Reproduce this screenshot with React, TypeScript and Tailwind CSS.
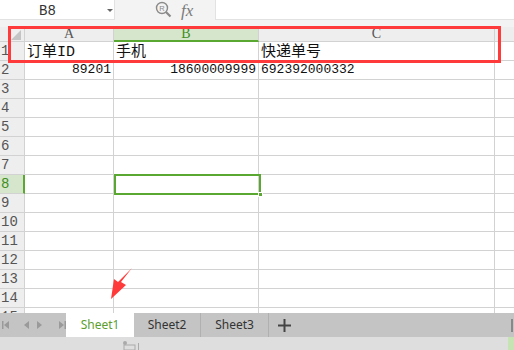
import React from "react";

const mono = { fontFamily: '"Liberation Mono", "Noto Sans CJK SC", monospace' };

const rows = Array.from({ length: 15 }, (_, i) => i + 1);

function Cell({ w, children, align = "left" }: { w: string; children?: React.ReactNode; align?: string }) {
  return (
    <div
      className={`${w} h-[19px] shrink-0 border-r border-b border-[#d2d2d2] flex items-center overflow-hidden whitespace-nowrap text-[13px] text-[#111] ${align === "right" ? "justify-end pr-[2px]" : "pl-[2px]"}`}
      style={mono}
    >
      {children}
    </div>
  );
}

function Zh({ children }: { children: React.ReactNode }) {
  return (
    <span className="text-[15px] leading-none pt-[2px]" style={mono}>
      {children}
    </span>
  );
}

export default function App() {
  return (
    <div className="relative w-[514px] h-[350px] overflow-hidden bg-white" style={mono}>
      {/* toolbar */}
      <div className="h-[27px] bg-[#f3f3f3] flex items-start">
        <div className="w-[115px] h-[20px] bg-white border-b border-r border-[#e2e2e2] flex items-center relative">
          <span className="absolute left-[39px] top-[1px] text-[14px] text-[#333]">B8</span>
          <svg className="absolute left-[107px] top-[9px]" width="6" height="3" viewBox="0 0 6 3"><path d="M0 0h6L3 3z" fill="#666" /></svg>
        </div>
        <div className="w-[100px] h-[20px] flex items-center relative">
          <svg className="absolute left-[40px] top-[1px]" width="17" height="17" viewBox="0 0 17 17">
            <circle cx="7" cy="7" r="5.5" fill="none" stroke="#8a8a8a" strokeWidth="1.4" />
            <path d="M11 11L15.5 15.5" stroke="#8a8a8a" strokeWidth="2.2" />
            <text x="7" y="9.6" textAnchor="middle" fontSize="7.5" fill="#8a8a8a" fontFamily="Liberation Sans">R</text>
          </svg>
          <span className="absolute left-[66px] top-[-2px] text-[17px] italic text-[#7a7a7a]" style={{ fontFamily: '"Liberation Serif", serif' }}>fx</span>
        </div>
        <div className="flex-1 h-[20px] bg-white border-b border-l border-[#e2e2e2]" />
      </div>

      {/* column header */}
      <div className="flex h-[15px] bg-[#eeeeee]">
        <div className="w-[25px] h-[15px] shrink-0 border-r border-b border-[#d2d2d2] relative">
          <svg className="absolute left-[11px] top-[3px]" width="10" height="10" viewBox="0 0 10 10"><path d="M10 0V10H0z" fill="#c4c4c4" /></svg>
        </div>
        <div className="w-[89px] shrink-0 border-r border-b border-[#d2d2d2] flex items-center justify-center text-[14px] text-[#555] leading-none" style={{ fontFamily: '"Liberation Serif", serif' }}>A</div>
        <div className="w-[145px] shrink-0 bg-[#d6e6cd] border-r border-[#d2d2d2] border-b-2 border-b-[#5aa832] flex items-center justify-center text-[14px] text-[#3f8f1f] leading-none" style={{ fontFamily: '"Liberation Serif", serif' }}>B</div>
        <div className="w-[236px] shrink-0 border-r border-b border-[#d2d2d2] flex items-center justify-center text-[14px] text-[#555] leading-none" style={{ fontFamily: '"Liberation Serif", serif' }}>C</div>
        <div className="flex-1 border-b border-[#d2d2d2]" />
      </div>

      {/* rows */}
      {rows.map((r) => (
        <div key={r} className="flex h-[19px]">
          <div
            className={`w-[25px] h-[19px] shrink-0 border-b border-[#d2d2d2] flex items-center pl-[1px] pt-[1px] text-[14px] ${r === 8 ? "bg-[#d6e6cd] text-[#3f8f1f] border-r-2 border-r-[#5aa832]" : "bg-[#eeeeee] text-[#555] border-r border-r-[#d2d2d2]"}`}
            style={mono}
          >
            {r}
          </div>
          <Cell w="w-[89px]" align={r === 2 ? "right" : "left"}>
            {r === 1 ? <Zh>订单ID</Zh> : r === 2 ? "89201" : null}
          </Cell>
          <Cell w="w-[145px]" align={r === 2 ? "right" : "left"}>
            {r === 1 ? <Zh>手机</Zh> : r === 2 ? "18600009999" : null}
          </Cell>
          <Cell w="w-[236px]">{r === 1 ? <Zh>快递单号</Zh> : r === 2 ? "692392000332" : null}</Cell>
          <div className="flex-1 h-[19px] border-b border-[#d2d2d2]" />
        </div>
      ))}

      {/* selected cell */}
      <div className="absolute left-[114px] top-[174px] w-[147px] h-[21px] border-2 border-[#5aa832]" />
      <div className="absolute left-[258px] top-[192px] w-[5px] h-[5px] bg-[#5aa832] border border-white" />
      {/* small green mark */}
      <div className="absolute left-[259px] top-[60px] w-[4px] h-[2px] bg-[#5aa832]" />

      {/* red annotation box */}
      <div className="absolute left-[8px] top-[26px] w-[493px] h-[37px] border-[3px] border-[#ff3a3a]" />

      {/* red arrow */}
      <svg className="absolute left-[106px] top-[266px]" width="30" height="36" viewBox="0 0 30 36">
        <path d="M26 2 L15 16 L20 19 L5 33 L8 13 L12 16 Z" fill="#ff3a3a" />
      </svg>

      {/* tab bar */}
      <div className="absolute left-0 top-[313px] w-[514px] h-[24px] bg-[#c4c4c4] flex items-stretch" style={{ fontFamily: '"Noto Sans", "Liberation Sans", sans-serif' }}>
        <div className="w-[66px] flex items-center gap-[6px] pl-[2px]">
          <svg width="8" height="10" viewBox="0 0 8 10"><rect x="0" y="1" width="1.5" height="8" fill="#9a9a9a" /><path d="M7 1V9L2 5z" fill="#9a9a9a" /></svg>
          <svg width="8" height="10" viewBox="0 0 8 10" className="ml-[6px]"><path d="M7 1V9L2 5z" fill="#9a9a9a" /></svg>
          <svg width="8" height="10" viewBox="0 0 8 10"><path d="M1 1V9L6 5z" fill="#9a9a9a" /></svg>
          <svg width="8" height="10" viewBox="0 0 8 10" className="ml-[8px]"><path d="M1 1V9L6 5z" fill="#9a9a9a" /><rect x="6.5" y="1" width="1.5" height="8" fill="#9a9a9a" /></svg>
        </div>
        <div className="w-[68px] bg-white flex items-center justify-center text-[12px] text-[#5c9e2e]">Sheet1</div>
        <div className="w-[67px] border-r border-[#b0b0b0] flex items-center justify-center text-[12px] text-[#333]">Sheet2</div>
        <div className="w-[68px] border-r border-[#b0b0b0] flex items-center justify-center text-[12px] text-[#333]">Sheet3</div>
        <div className="w-[30px] flex items-center justify-center">
          <svg width="13" height="13" viewBox="0 0 13 13"><path d="M6.5 0V13M0 6.5H13" stroke="#444" strokeWidth="2" /></svg>
        </div>
        <div className="flex-1" />
        <div className="w-[2px] h-[13px] bg-[#888] self-center mr-[1px]" />
      </div>

      {/* status bar */}
      <div className="absolute left-0 top-[337px] w-[514px] h-[13px] bg-[#dedede]">
        <svg className="absolute left-[122px] top-[3px]" width="20" height="10" viewBox="0 0 20 10">
          <circle cx="3" cy="3" r="2" fill="#aaa" />
          <rect x="2" y="5" width="11" height="5" fill="none" stroke="#aaa" strokeWidth="1" />
          <rect x="16" y="3" width="1" height="7" fill="#aaa" />
        </svg>
        <div className="absolute right-0 top-0 w-[6px] h-[13px] bg-[#c6e3b4]" />
      </div>
    </div>
  );
}
